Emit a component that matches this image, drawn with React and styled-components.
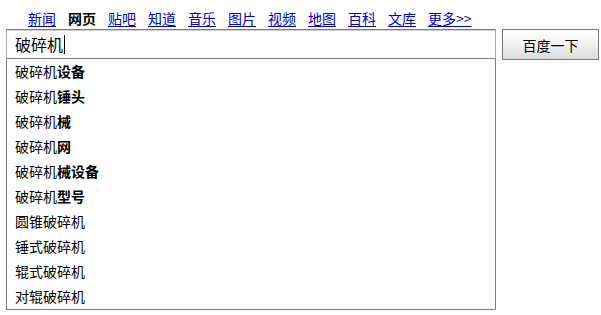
import React from "react";
import styled, { createGlobalStyle } from "styled-components";

const Global = createGlobalStyle`
  html, body { margin: 0; padding: 0; background: #fff; }
  body { font-family: "Noto Sans CJK SC", "Liberation Sans", sans-serif; color: #000; }
`;

const Page = styled.div`
  width: 601px;
  height: 315px;
  padding: 6px 0 0 6px;
  box-sizing: border-box;
`;

const Nav = styled.nav`
  display: flex;
  gap: 12px;
  padding-left: 22px;
  height: 23px;
  align-items: center;
  font-size: 14px;
  line-height: 16px;
`;

const NavLink = styled.a`
  color: ${(p) => (p.$active ? "#000" : "#0000cc")};
  font-weight: ${(p) => (p.$active ? 700 : 400)};
  text-decoration: ${(p) => (p.$active ? "none" : "underline")};
  text-underline-offset: 2px;
  cursor: pointer;
  white-space: nowrap;
`;

const SearchRow = styled.div`
  display: flex;
  align-items: flex-start;
  gap: 6px;
`;

const Field = styled.div`
  width: 490px;
  display: flex;
  flex-direction: column;
`;

const Input = styled.div`
  height: 30px;
  box-sizing: border-box;
  border: 1px solid #a9a9a9;
  border-top-color: #7a7a7a;
  border-bottom-color: #7f7f7f;
  box-shadow: inset 0 1px 0 #d4d4d4;
  display: flex;
  align-items: center;
  padding-left: 8px;
  font-size: 16px;
`;

const Caret = styled.span`
  display: inline-block;
  width: 1px;
  height: 19px;
  background: #000;
  margin-left: 1px;
`;

const Suggest = styled.ul`
  list-style: none;
  margin: 0;
  padding: 0;
  border: 1px solid #817f7f;
  border-top: none;
  box-sizing: border-box;
`;

const Item = styled.li`
  height: 25px;
  line-height: 25px;
  padding-left: 8px;
  font-size: 14px;
  white-space: nowrap;
  b { font-weight: 700; }
`;

const Button = styled.button`
  width: 97px;
  height: 31px;
  border: 1px solid #7a7a7a;
  background: linear-gradient(#ffffff, #f1f1f1 50%, #dcdcdc);
  font-family: "Noto Sans CJK SC", sans-serif;
  font-size: 14px;
  color: #000;
  padding: 0;
  cursor: pointer;
`;

const navItems = ["新闻", "网页", "贴吧", "知道", "音乐", "图片", "视频", "地图", "百科", "文库", "更多>>"];

const suggestions = [
  ["破碎机", "设备"],
  ["破碎机", "锤头"],
  ["破碎机", "械"],
  ["破碎机", "网"],
  ["破碎机", "械设备"],
  ["破碎机", "型号"],
  ["圆锥破碎机", ""],
  ["锤式破碎机", ""],
  ["辊式破碎机", ""],
  ["对辊破碎机", ""],
];

export default function App() {
  return (
    <>
      <Global />
      <Page>
        <Nav>
          {navItems.map((n) => (
            <NavLink key={n} $active={n === "网页"}>{n}</NavLink>
          ))}
        </Nav>
        <SearchRow>
          <Field>
            <Input>破碎机<Caret /></Input>
            <Suggest>
              {suggestions.map(([a, b], i) => (
                <Item key={i}>{a}{b && <b>{b}</b>}</Item>
              ))}
            </Suggest>
          </Field>
          <Button>百度一下</Button>
        </SearchRow>
      </Page>
    </>
  );
}
